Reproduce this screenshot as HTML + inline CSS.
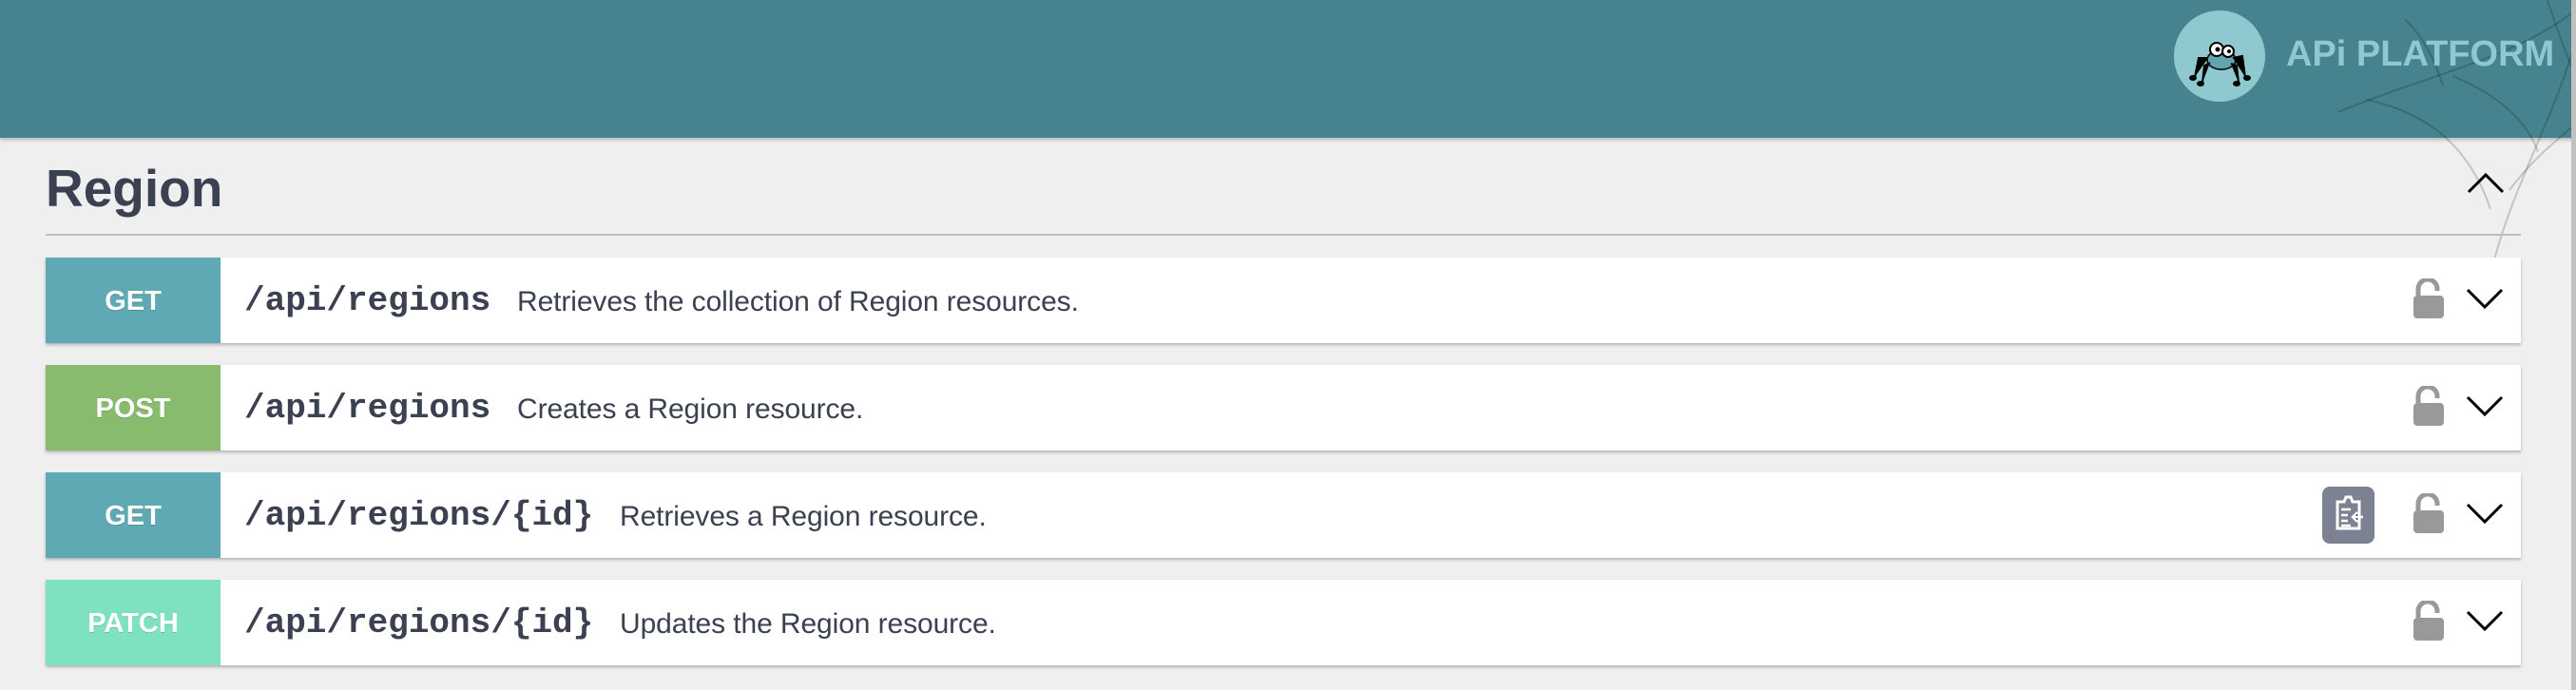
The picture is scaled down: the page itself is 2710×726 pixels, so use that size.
<!DOCTYPE html>
<html><head><meta charset="utf-8"><style>
*{margin:0;padding:0;box-sizing:border-box}
html,body{width:2710px;height:726px;overflow:hidden;background:#efefef;font-family:"Liberation Sans",sans-serif;position:relative}
.hdr{position:absolute;left:0;top:0;width:2710px;height:145px;background:#47838e;box-shadow:0 2px 4px rgba(0,0,0,.25)}
.logo{position:absolute;left:2287px;top:11px;width:96px;height:96px;border-radius:50%;background:#90c8d0}
.brand{position:absolute;left:2405px;top:36px;font-size:38px;font-weight:bold;color:#90c8d0;letter-spacing:0px;white-space:nowrap;font-family:"Liberation Sans",sans-serif}
.sb{position:absolute;left:2705px;top:0;width:5px;height:726px;background:#c0c0c0}
h4{position:absolute;left:48px;top:166px;font-size:55px;font-weight:bold;color:#3b4151}
.hr{position:absolute;left:48px;top:246px;width:2604px;height:2px;background:#bdbdbd}
.row{position:absolute;left:48px;width:2604px;height:90px;background:#fff;box-shadow:0 2px 3px rgba(0,0,0,.25)}
.m{position:absolute;left:0;top:0;width:184px;height:90px;color:#fff;font-weight:bold;font-size:29px;text-align:center;line-height:92px;text-shadow:0 1px 0 rgba(0,0,0,.15)}
.p{position:absolute;left:209px;top:0;line-height:92px;font-family:"Liberation Mono",monospace;font-weight:bold;font-size:36px;color:#3b4151}
.d{position:absolute;top:0;line-height:94px;font-size:30px;color:#3b4151;letter-spacing:-0.1px}
.lock{position:absolute;left:2489px;top:22px}
.chev{position:absolute;left:2546px;top:30px}
</style></head><body>
<div class="hdr"></div>
<svg style="position:absolute;left:2400px;top:0" width="310" height="300" fill="none" stroke="rgba(0,0,0,.18)" stroke-width="2">
<path d="M220 290 C240 200 290 120 310 40"/><path d="M60 118 C150 80 250 60 310 10"/><path d="M90 105 C160 120 200 160 220 220"/><path d="M180 80 C230 100 260 130 270 160"/><path d="M240 200 C270 160 300 140 310 130"/><path d="M130 20 C150 40 160 60 170 90"/><path d="M280 0 C290 30 300 60 310 80"/>
</svg>
<div class="logo"><svg width="96" height="96" viewBox="0 0 96 96"><ellipse cx="50" cy="52" rx="15" ry="10" fill="#5fa4b0" stroke="#000" stroke-width="1.5"/><circle cx="45" cy="41" r="7" fill="#fff" stroke="#000" stroke-width="2"/><circle cx="57" cy="43" r="6" fill="#fff" stroke="#000" stroke-width="2"/><circle cx="46" cy="41" r="2.5" fill="#000"/><circle cx="58" cy="43" r="2" fill="#000"/><g stroke="#000" stroke-width="2"><path d="M36 50 L26 50 L22 70"/><path d="M38 55 L32 58 L30 76"/><path d="M62 50 L72 48 L75 70"/><path d="M60 56 L66 58 L68 76"/></g><g fill="#000"><ellipse cx="20" cy="71" rx="4" ry="3"/><ellipse cx="28" cy="77" rx="4" ry="3"/><ellipse cx="77" cy="71" rx="4" ry="3"/><ellipse cx="66" cy="77" rx="4" ry="3"/></g></svg></div>
<div class="brand">APi PLATFORM</div>
<div class="sb"></div>
<h4>Region</h4>
<svg style="position:absolute;left:2595px;top:180px" width="40" height="26"><path d="M2 22 L20 4 L38 22" fill="none" stroke="#000" stroke-width="3"/></svg>
<div class="hr"></div>

<div class="row" style="top:271px"><div class="m" style="background:#5ea9b3">GET</div><div class="p">/api/regions</div><div class="d" style="left:496px">Retrieves the collection of Region resources.</div>
<svg class="lock" width="36" height="44" viewBox="0 0 36 44"><path d="M7 18 V11 a10 10 0 0 1 20 0 V13" fill="none" stroke="#999" stroke-width="5"/><rect x="2" y="18" width="32" height="24" rx="4" fill="#999"/></svg>
<svg class="chev" width="40" height="26"><path d="M2 4 L20 22 L38 4" fill="none" stroke="#000" stroke-width="3"/></svg></div>

<div class="row" style="top:384px"><div class="m" style="background:#88bb6d">POST</div><div class="p">/api/regions</div><div class="d" style="left:496px">Creates a Region resource.</div>
<svg class="lock" width="36" height="44" viewBox="0 0 36 44"><path d="M7 18 V11 a10 10 0 0 1 20 0 V13" fill="none" stroke="#999" stroke-width="5"/><rect x="2" y="18" width="32" height="24" rx="4" fill="#999"/></svg>
<svg class="chev" width="40" height="26"><path d="M2 4 L20 22 L38 4" fill="none" stroke="#000" stroke-width="3"/></svg></div>

<div class="row" style="top:497px"><div class="m" style="background:#5ea9b3">GET</div><div class="p">/api/regions/{id}</div><div class="d" style="left:604px">Retrieves a Region resource.</div>
<div style="position:absolute;left:2395px;top:15px;width:55px;height:60px;border-radius:8px;background:#7d8293"><svg width="55" height="60" viewBox="0 0 55 60"><path d="M16 16 H23 L25 11 H30 L32 16 H39 V44 H16 Z" fill="none" stroke="#fff" stroke-width="3"/><g stroke="#fff" stroke-width="2.5"><path d="M20 24 H30 M20 30 H27 M20 36 H27 M20 41 H30"/><path d="M43 32 H33 M37 27 L32 32 L37 37"/></g></svg></div>
<svg class="lock" width="36" height="44" viewBox="0 0 36 44"><path d="M7 18 V11 a10 10 0 0 1 20 0 V13" fill="none" stroke="#999" stroke-width="5"/><rect x="2" y="18" width="32" height="24" rx="4" fill="#999"/></svg>
<svg class="chev" width="40" height="26"><path d="M2 4 L20 22 L38 4" fill="none" stroke="#000" stroke-width="3"/></svg></div>

<div class="row" style="top:610px"><div class="m" style="background:#7ee2c0">PATCH</div><div class="p">/api/regions/{id}</div><div class="d" style="left:604px">Updates the Region resource.</div>
<svg class="lock" width="36" height="44" viewBox="0 0 36 44"><path d="M7 18 V11 a10 10 0 0 1 20 0 V13" fill="none" stroke="#999" stroke-width="5"/><rect x="2" y="18" width="32" height="24" rx="4" fill="#999"/></svg>
<svg class="chev" width="40" height="26"><path d="M2 4 L20 22 L38 4" fill="none" stroke="#000" stroke-width="3"/></svg></div>
</body></html>
